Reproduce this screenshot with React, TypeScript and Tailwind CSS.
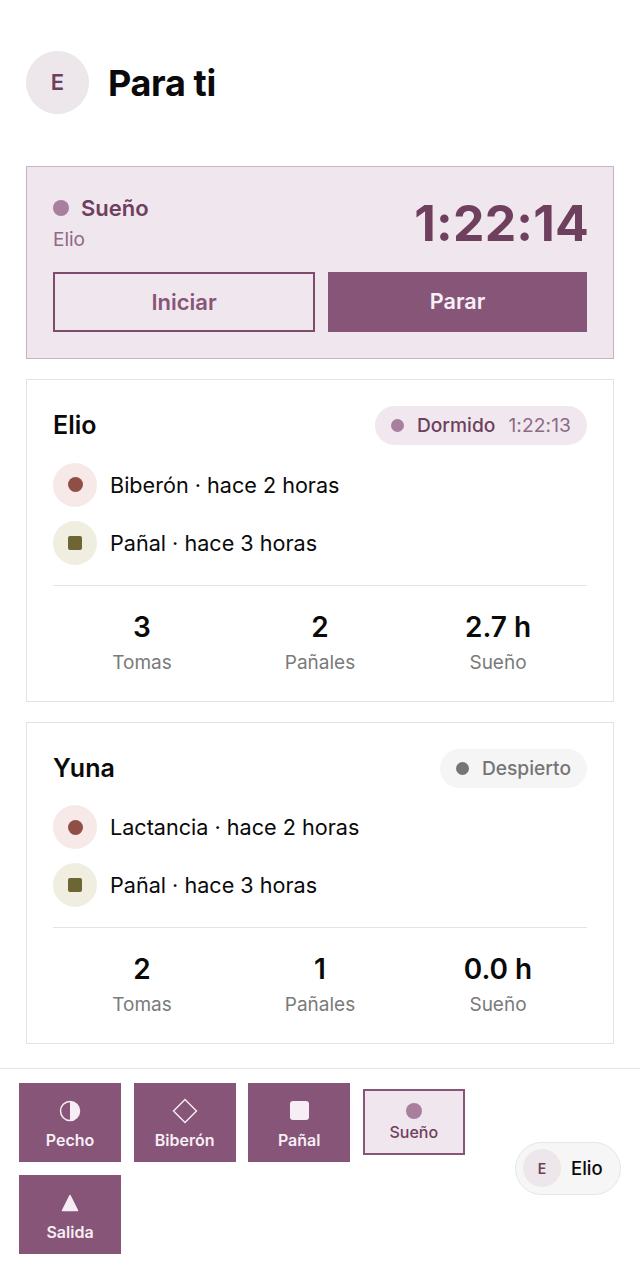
const font = { fontFamily: 'Inter, sans-serif' };

function Avatar({ size }: { size: 'lg' | 'sm' }) {
  if (size === 'lg') {
    return (
      <div className="w-[63px] h-[63px] rounded-full bg-[#ede7ec] border border-[#e8e8e8] flex items-center justify-center text-[22px] font-semibold text-[#6f3f5e]">
        E
      </div>
    );
  }
  return (
    <div className="w-[38px] h-[38px] rounded-full bg-[#ede7ec] flex items-center justify-center text-[14px] font-semibold text-[#6f3f5e]">
      E
    </div>
  );
}

function ActivityRow({ kind, text }: { kind: 'feed' | 'diaper'; text: string }) {
  return (
    <div className="flex items-center gap-[13px] h-[45px]">
      {kind === 'feed' ? (
        <div className="w-[44px] h-[44px] rounded-full bg-[#f6e9e7] flex items-center justify-center">
          <div className="w-[15px] h-[15px] rounded-full bg-[#8f4f46]" />
        </div>
      ) : (
        <div className="w-[44px] h-[44px] rounded-full bg-[#f0eee0] flex items-center justify-center">
          <div className="w-[14px] h-[14px] rounded-[2px] bg-[#6d6534]" />
        </div>
      )}
      <span className="pt-[2px] text-[21.6px] leading-none text-[#0a0a0a]">{text}</span>
    </div>
  );
}

function Stat({ value, label }: { value: string; label: string }) {
  return (
    <div className="flex flex-col items-center">
      <span className="text-[28px] leading-[34px] font-semibold text-[#0a0a0a]">{value}</span>
      <span className="text-[19px] leading-[24px] mt-[7px] text-[#7a7a7a]">{label}</span>
    </div>
  );
}

function BabyCard({ name, badge, rows, stats }: {
  name: string;
  badge: React.ReactNode;
  rows: { kind: 'feed' | 'diaper'; text: string }[];
  stats: { value: string; label: string }[];
}) {
  return (
    <section className="border border-[#e3e3e3] bg-white px-[26px] pt-[26px] pb-[26px]">
      <div className="flex items-center justify-between h-[39px]">
        <h2 className="text-[25px] leading-none font-semibold text-[#0a0a0a]">{name}</h2>
        {badge}
      </div>
      <div className="mt-[17px] flex flex-col gap-[13px]">
        {rows.map((r) => (
          <ActivityRow key={r.text} kind={r.kind} text={r.text} />
        ))}
      </div>
      <div className="mt-[19.6px] border-t border-[#e3e3e3] pt-[24px] grid grid-cols-3">
        {stats.map((s) => (
          <Stat key={s.label} value={s.value} label={s.label} />
        ))}
      </div>
    </section>
  );
}

function QuickButton({ label, icon }: { label: string; icon: React.ReactNode }) {
  return (
    <button className="w-[102px] h-[79px] bg-[#875577] flex flex-col items-center pt-[15px] text-[#f6eef4]">
      <div className="h-[26px] flex items-center justify-center">{icon}</div>
      <span className="mt-[6px] text-[16px] leading-[20px] font-semibold">{label}</span>
    </button>
  );
}

export default function App() {
  return (
    <div style={font} className="w-full h-[1267px] bg-white flex flex-col overflow-hidden">
      <main className="flex-1 px-[26px] pt-[51px]">
        <header className="flex items-center gap-[19px] h-[63px]">
          <Avatar size="lg" />
          <h1 className="text-[36px] leading-none font-bold tracking-[-0.35px] text-[#0a0a0a]">Para ti</h1>
        </header>

        <section className="mt-[52px] h-[193px] border border-[#c9b3c2] bg-[#f0e6ed] px-[26px] pt-[26px]">
          <div className="flex justify-between items-start h-[79px]">
            <div>
              <div className="flex items-center gap-[12px] h-[30px]">
                <div className="w-[16px] h-[16px] rounded-full bg-[#a87f9c]" />
                <span className="text-[22px] leading-none font-semibold text-[#6f3f5e]">Sueño</span>
              </div>
              <div className="mt-[5px] text-[19px] leading-[24px] text-[#8f6a84]">Elio</div>
            </div>
            <div className="mr-[-2px] text-[50px] leading-[60px] font-bold tracking-[0.2px] text-[#6f3f5e]">1:22:14</div>
          </div>
          <div className="grid grid-cols-[262px_1fr] gap-[13px]">
            <button className="h-[60px] border-2 border-[#7d4c6d] text-[22px] font-semibold text-[#875577]">Iniciar</button>
            <button className="h-[60px] pb-[2px] bg-[#875577] text-[21.6px] font-semibold text-[#f8f0f6]">Parar</button>
          </div>
        </section>

        <div className="mt-[20px] flex flex-col gap-[20px]">
          <BabyCard
            name="Elio"
            badge={
              <div className="h-[39px] rounded-full bg-[#f0e8ee] px-[16px] flex items-center">
                <div className="w-[13px] h-[13px] rounded-full bg-[#a87f9c]" />
                <span className="ml-[13px] text-[19.2px] font-medium text-[#6f3f5e]">Dormido</span>
                <span className="ml-[13px] text-[19.2px] tracking-[0.1px] text-[#8f6a84]">1:22:13</span>
              </div>
            }
            rows={[
              { kind: 'feed', text: 'Biberón · hace 2 horas' },
              { kind: 'diaper', text: 'Pañal · hace 3 horas' },
            ]}
            stats={[
              { value: '3', label: 'Tomas' },
              { value: '2', label: 'Pañales' },
              { value: '2.7 h', label: 'Sueño' },
            ]}
          />
          <BabyCard
            name="Yuna"
            badge={
              <div className="h-[39px] rounded-full bg-[#f5f5f5] px-[16px] flex items-center">
                <div className="w-[13px] h-[13px] rounded-full bg-[#757575]" />
                <span className="ml-[13px] text-[19.2px] font-medium text-[#757575]">Despierto</span>
              </div>
            }
            rows={[
              { kind: 'feed', text: 'Lactancia · hace 2 horas' },
              { kind: 'diaper', text: 'Pañal · hace 3 horas' },
            ]}
            stats={[
              { value: '2', label: 'Tomas' },
              { value: '1', label: 'Pañales' },
              { value: '0.0 h', label: 'Sueño' },
            ]}
          />
        </div>
      </main>

      <footer className="h-[199px] border-t border-[#e6e6e6] px-[19px] flex items-center justify-between">
        <div className="w-[460px] flex flex-wrap items-center gap-x-[12.6px] gap-y-[13px]">
          <QuickButton
            label="Pecho"
            icon={
              <svg width="22" height="22" viewBox="0 0 22 22">
                <circle cx="11" cy="11" r="9.5" fill="none" stroke="#f6eef4" strokeWidth="1.5" />
                <path d="M11 1.5a9.5 9.5 0 0 1 0 19z" fill="#f6eef4" />
              </svg>
            }
          />
          <QuickButton
            label="Biberón"
            icon={
              <svg width="26" height="26" viewBox="0 0 26 26">
                <path d="M13 1.5 24.5 13 13 24.5 1.5 13z" fill="none" stroke="#f6eef4" strokeWidth="1.4" />
              </svg>
            }
          />
          <QuickButton label="Pañal" icon={<div className="w-[19px] h-[19px] rounded-[3px] bg-[#f6eef4]" />} />
          <button className="w-[102px] h-[66px] border-2 border-[#875577] bg-[#f0e6ed] flex flex-col items-center justify-center">
            <div className="w-[16px] h-[16px] rounded-full bg-[#a87f9c]" />
            <span className="mt-[3px] text-[16px] leading-[20px] font-medium text-[#6f3f5e]">Sueño</span>
          </button>
          <QuickButton
            label="Salida"
            icon={
              <svg width="18" height="18" viewBox="0 0 18 18">
                <path d="M9 1.5 16.5 16.5H1.5z" fill="#f6eef4" stroke="#f6eef4" strokeWidth="1.5" strokeLinejoin="round" />
              </svg>
            }
          />
        </div>
        <div className="w-[106px] h-[53px] rounded-full bg-[#f6f6f6] border border-[#e6e6e6] pl-[7px] flex items-center gap-[10px]">
          <Avatar size="sm" />
          <span className="pt-[1px] text-[18.5px] font-medium text-[#0a0a0a]">Elio</span>
        </div>
      </footer>
    </div>
  );
}
